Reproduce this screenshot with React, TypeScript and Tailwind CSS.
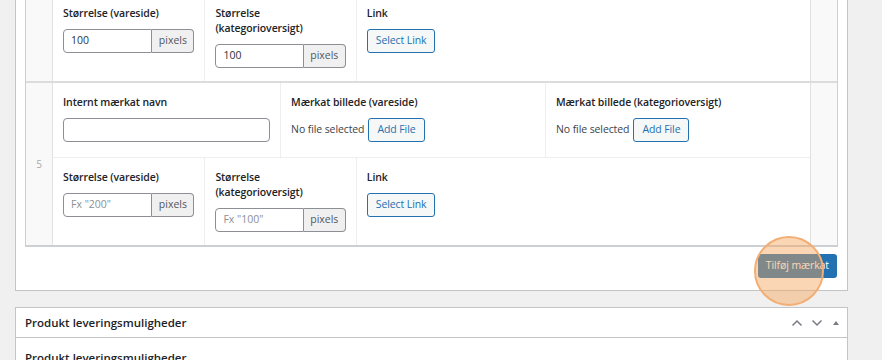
import { ReactNode } from 'react'

const font = { fontFamily: '"Open Sans", "Noto Sans", sans-serif' }

function Label({ children }: { children: ReactNode }) {
  return (
    <div className="mb-[8px] text-[10.5px] font-semibold leading-[15px] tracking-[-0.1px] text-[#1d2327]">
      {children}
    </div>
  )
}

function PixelInput({ value, placeholder }: { value?: string; placeholder?: string }) {
  return (
    <div className="flex h-[24px] w-full">
      <div className="flex flex-1 items-center rounded-l-[4px] border border-[#8c8f94] bg-white px-[7px] text-[10.5px]">
        {value ? <span className="text-[#2c3338]">{value}</span> : <span className="text-[#8c8f94]">{placeholder}</span>}
      </div>
      <div className="flex w-[42px] items-center justify-center rounded-r-[4px] border border-l-0 border-[#8c8f94] bg-[#f0f0f1] text-[10.5px] text-[#50575e]">
        pixels
      </div>
    </div>
  )
}

function SmallButton({ children }: { children: ReactNode }) {
  return (
    <button className="flex h-[24px] items-center rounded-[3px] border border-[#2271b1] bg-[#f6f7f7] px-[8px] text-[10.5px] tracking-[-0.1px] text-[#2271b1]">
      {children}
    </button>
  )
}

function SizesLine({ first, side, cat, border }: { first?: boolean; side?: string; cat?: string; border?: boolean }) {
  const sideVal = first ? '100' : undefined
  const catVal = first ? '100' : undefined
  return (
    <div className={`flex ${border ? 'border-t border-[#eeeeee]' : ''}`}>
      <div className="w-[20%] px-[10px] pt-[12px] pb-[13px]">
        <Label>Størrelse (vareside)</Label>
        <PixelInput value={sideVal} placeholder={side} />
      </div>
      <div className="w-[20%] border-l border-[#eeeeee] px-[10px] pt-[12px] pb-[13px]">
        <Label>
          Størrelse
          <br />
          (kategorioversigt)
        </Label>
        <PixelInput value={catVal} placeholder={cat} />
      </div>
      <div className="flex-1 border-l border-[#eeeeee] px-[10px] pt-[12px] pb-[13px]">
        <Label>Link</Label>
        <div className="flex">
          <SmallButton>Select Link</SmallButton>
        </div>
      </div>
    </div>
  )
}

function FileField({ label, border }: { label: string; border?: boolean }) {
  return (
    <div className={`w-[35%] px-[10px] pt-[12px] pb-[15px] ${border ? 'border-l border-[#eeeeee]' : ''}`}>
      <Label>{label}</Label>
      <div className="flex items-center gap-[4px]">
        <span className="text-[10.5px] tracking-[-0.1px] text-[#3c434a]">No file selected</span>
        <SmallButton>Add File</SmallButton>
      </div>
    </div>
  )
}

function Row({ num, children, top }: { num?: string; children: ReactNode; top?: boolean }) {
  return (
    <div className={`flex ${top ? 'border-t-2 border-[#dcdcde]' : ''}`}>
      <div className="flex w-[27px] shrink-0 items-center justify-center border-r border-[#e1e1e1] bg-[#f9f9f9] text-[10px] text-[#a7aaad]">
        {num}
      </div>
      <div className="flex-1">{children}</div>
      <div className="w-[27px] shrink-0 border-l border-[#e1e1e1] bg-[#f9f9f9]" />
    </div>
  )
}

export default function App() {
  return (
    <div className="h-[360px] overflow-hidden bg-[#f0f0f1]" style={font}>
      <div className="ml-[15px] w-[833px]">
        {/* Mærkater panel */}
        <div className="-mt-[6px] border-x border-b border-[#c3c4c7] bg-white px-[9px] pb-[12px]">
          <div className="border-x border-b-2 border-[#ccd0d4]">
            <Row>
              <SizesLine first />
            </Row>
            <Row num="5" top>
              <div className="flex">
                <div className="w-[30%] px-[10px] pt-[12px] pb-[15px]">
                  <Label>Internt mærkat navn</Label>
                  <div className="h-[24px] rounded-[4px] border border-[#8c8f94] bg-white" />
                </div>
                <FileField label="Mærkat billede (vareside)" border />
                <FileField label="Mærkat billede (kategorioversigt)" border />
              </div>
              <SizesLine side='Fx "200"' cat='Fx "100"' border />
            </Row>
          </div>
          <div className="mt-[7px] flex justify-end pr-[1px]">
            <div className="relative flex">
              <button className="flex h-[24px] items-center rounded-[3px] bg-[#2271b1] px-[8px] text-[10.5px] tracking-[-0.1px] text-white">
                Tilføj mærkat
              </button>
              {/* click highlight */}
              <div className="pointer-events-none absolute -top-[18px] right-[13px] h-[70px] w-[70px] rounded-full border-2 border-[#f2ae74] bg-[#f7a35c]/45" />
            </div>
          </div>
        </div>

        {/* Levering panel */}
        <div className="mt-[16px] border border-[#c3c4c7] bg-white">
          <div className="flex h-[30px] items-center justify-between border-b border-[#c3c4c7] pl-[9px] pr-[6px]">
            <span className="text-[11.5px] font-semibold text-[#1d2327]">Produkt leveringsmuligheder</span>
            <div className="flex items-center gap-[8px] text-[#787c82]">
              <svg width="12" height="12" viewBox="0 0 12 12" fill="none" stroke="currentColor" strokeWidth="1.5">
                <path d="M1.5 8.5l4.5-4.5 4.5 4.5" />
              </svg>
              <svg width="12" height="12" viewBox="0 0 12 12" fill="none" stroke="currentColor" strokeWidth="1.5">
                <path d="M1.5 3.5l4.5 4.5 4.5-4.5" />
              </svg>
              <svg width="10" height="10" viewBox="0 0 10 10" fill="currentColor">
                <path d="M2 7l3-4 3 4z" />
              </svg>
            </div>
          </div>
          <div className="pl-[9px] pt-[11px] text-[11.5px] font-semibold text-[#1d2327]">Produkt leveringsmuligheder</div>
        </div>
      </div>
    </div>
  )
}
